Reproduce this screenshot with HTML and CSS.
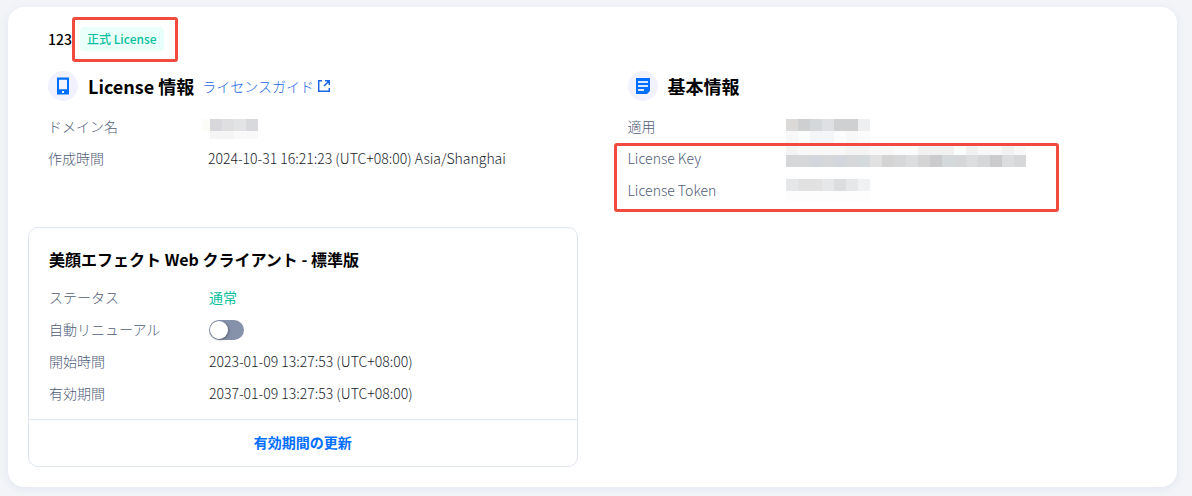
FILE: index.html
```html
<!DOCTYPE html>
<html lang="ja">
  <head>
    <meta charset="UTF-8" />
    <meta name="viewport" content="width=device-width, initial-scale=1.0" />
    <title>License</title>
    <link rel="stylesheet" href="styles.css">
  </head>
  <body>
    <main class="panel">
      <div class="panel-title">
        <h1>123</h1>
        <span class="badge">正式 License<i class="marker marker-badge"></i></span>
      </div>

      <div class="columns">
        <section class="info">
          <div class="info-head">
            <span class="info-icon">
              <svg width="14" height="18" viewBox="0 0 14 18">
                <path fill="#006eff" fill-rule="evenodd" d="M1 .4h12v17.2H1zM3 2.8v9.4h8V2.8zM6 14v2h2v-2z" />
              </svg>
            </span>
            <h2>License 情報</h2>
            <a class="guide-link" href="#">ライセンスガイド<svg width="14" height="14" viewBox="0 0 14 14" fill="none" stroke="currentColor" stroke-width="1.5">
                <path d="M5 1.7H1.7v10.6h10.6V9M8 1.7h4.3V6M12.3 1.7 7 7" />
              </svg></a>
          </div>
          <dl class="rows">
            <div class="row">
              <dt>ドメイン名</dt>
              <dd>
                <svg class="mosaic" width="50" height="32">
                  <path fill="#fcfdf8" d="M-6 8h8v12h-8z" />
                  <path fill="#d8d8dc" d="M2 8h12v12H2z" />
                  <path fill="#dfdfe2" d="M14 8h12v12H14z" />
                  <path fill="#e2e3e5" d="M26 8h12v12H26z" />
                  <path fill="#d8d9dc" d="M38 8h12v12H38z" />
                  <path fill="#f5f5f5" d="M2 20h24v8H2z" />
                  <path fill="#f9f9fa" d="M26 20h24v8H26z" />
                </svg>
              </dd>
            </div>
            <div class="row">
              <dt>作成時間</dt>
              <dd>2024-10-31 16:21:23 (UTC+08:00) Asia/Shanghai</dd>
            </div>
          </dl>
        </section>

        <section class="info basic">
          <div class="info-head">
            <span class="info-icon">
              <svg width="14" height="16" viewBox="0 0 14 16">
                <path fill="#006eff" d="M0 0h14v13l-3 3H0z" />
                <path stroke="#d6e6ff" stroke-width="2" d="M2 4h10M2 8h10M2 12h6" />
              </svg>
            </span>
            <h2>基本情報</h2>
          </div>
          <dl class="rows">
            <div class="row">
              <dt>適用</dt>
              <dd>
                <svg class="mosaic" width="84" height="32">
                  <path fill="#dbdad9" d="M0 8h12v12H0z" />
                  <path fill="#cecfd1" d="M12 8h12v12H12z" />
                  <path fill="#d4d8da" d="M24 8h12v12H24z" />
                  <path fill="#dfe0e3" d="M36 8h12v12H36z" />
                  <path fill="#cfd0d2" d="M48 8h24v12H48z" />
                  <path fill="#eeeff1" d="M72 8h12v12H72z" />
                  <path fill="#f8f8f8" d="M0 20h12v12H0z" />
                  <path fill="#fafdfc" d="M12 20h12v12H12z" />
                  <path fill="#f4f5f7" d="M24 20h24v12H24z" />
                  <path fill="#fdfcfd" d="M48 20h12v12H48z" />
                  <path fill="#f8f8f9" d="M60 20h12v12H60z" />
                  <path fill="#fbfbfb" d="M72 20h12v12H72z" />
                </svg>
              </dd>
            </div>
          </dl>
          <div class="marked">
            <dl class="rows">
              <div class="row">
                <dt>License Key</dt>
                <dd>
                  <svg class="mosaic" width="240" height="32">
                    <path fill="#f4f4f4" d="M0 0h12v12H0zM60 0h24v12H60z" />
                    <path fill="#f8f8f8" d="M12 0h48v12H12zM84 0h24v12H84zM192 0h24v12h-24zM228 0h12v12h-12z" />
                    <path fill="#fbfbfb" d="M108 0h24v12h-24z" />
                    <path fill="#f1f1f1" d="M132 0h36v12h-36zM180 0h12v12h-12zM216 0h12v12h-12z" />
                    <path fill="#f9fdfc" d="M168 0h12v12h-12z" />
                    <path fill="#d6d7d9" d="M0 12h240v12H0z" />
                    <path fill="#d3d6dc" d="M24 12h12v12H24zM48 12h12v12H48z" />
                    <path fill="#d4d9dc" d="M72 12h12v12H72zM156 12h12v12h-12z" />
                    <path fill="#e1e1e2" d="M84 12h12v12H84z" />
                    <path fill="#d4d4d4" d="M96 12h12v12H96zM132 12h12v12h-12z" />
                    <path fill="#cbcbcd" d="M144 12h12v12h-12zM204 12h12v12h-12z" />
                    <path fill="#dcdddf" d="M120 12h12v12h-12zM180 12h12v12h-12zM216 12h12v12h-12z" />
                  </svg>
                </dd>
              </div>
              <div class="row">
                <dt>License Token</dt>
                <dd>
                  <svg class="mosaic" width="84" height="32">
                    <path fill="#e6e7e8" d="M0 4h12v12H0zM36 4h12v12H36zM60 4h12v12H60z" />
                    <path fill="#e2e1e2" d="M12 4h24v12H12z" />
                    <path fill="#dcdddf" d="M48 4h12v12H48z" />
                    <path fill="#f0f1f3" d="M72 4h12v12H72z" />
                    <path fill="#fdfdfd" d="M0 16h84v11H0z" />
                  </svg>
                </dd>
              </div>
            </dl>
            <i class="marker marker-rows"></i>
          </div>
        </section>

        <section class="plan">
          <h3>美顔エフェクト Web クライアント - 標準版</h3>
          <dl class="rows">
            <div class="row">
              <dt>ステータス</dt>
              <dd class="status">通常</dd>
            </div>
            <div class="row">
              <dt><label for="auto-renew">自動リニューアル</label></dt>
              <dd><input class="switch" type="checkbox" id="auto-renew" /></dd>
            </div>
            <div class="row">
              <dt>開始時間</dt>
              <dd>2023-01-09 13:27:53 (UTC+08:00)</dd>
            </div>
            <div class="row">
              <dt>有効期間</dt>
              <dd>2037-01-09 13:27:53 (UTC+08:00)</dd>
            </div>
          </dl>
          <button type="button" class="renew">有効期間の更新</button>
        </section>
      </div>
    </main>
  </body>
</html>
```

FILE: styles.css
```css
* {
  box-sizing: border-box;
}
body {
  margin: 0;
  padding: 7px 15px 9px 8px;
  background-color: #f2f4f8;
  color: #000;
  font-family: "Noto Sans CJK JP", sans-serif;
  font-size: 14px;
}
h1,
h2,
h3,
dl,
dd {
  margin: 0;
}
.panel {
  padding: 20px;
  background-color: #fff;
  border-radius: 16px;
  box-shadow: 0 2px 8px rgba(54, 88, 140, 0.08);
}
.panel-title {
  display: flex;
  align-items: center;
  gap: 8px;
  padding-left: 20px;
  margin-bottom: 20px;
}
.panel-title h1 {
  font-size: 14px;
  font-weight: 500;
  line-height: 24px;
}
.badge {
  position: relative;
  padding: 0 7px;
  border-radius: 4px;
  background-color: #e8fffa;
  color: #0abf9f;
  font-size: 12px;
  font-weight: 500;
  line-height: 24px;
}
.marker {
  position: absolute;
  border: 3px solid #f04b3e;
  border-radius: 3px;
}
.marker-badge {
  inset: -10px -14px -11px -8px;
}
.marker-rows {
  top: 0;
  bottom: -5px;
  left: -14px;
  width: 445px;
}
.columns {
  display: grid;
  grid-template-columns: 1fr 1fr;
  gap: 20px 30px;
}
.info {
  padding-left: 20px;
}
.info-head {
  display: flex;
  align-items: center;
  gap: 10px;
  height: 30px;
  margin-bottom: 10px;
}
.info-head h2 {
  font-size: 18px;
  line-height: 30px;
}
.info-icon {
  display: flex;
  align-items: center;
  justify-content: center;
  width: 30px;
  height: 30px;
  border-radius: 50%;
  background-color: #f2f2ff;
}
.guide-link {
  display: flex;
  align-items: center;
  gap: 3px;
  margin-left: -2px;
  color: #1c66e5;
  font-weight: 300;
  text-decoration: none;
}
.marked {
  position: relative;
}
.row {
  display: flex;
  height: 32px;
  font-weight: 300;
  line-height: 30px;
}
.row dt {
  width: 160px;
  color: #4f5c78;
}
.basic dt {
  width: 158px;
}
.row dd {
  color: #20242c;
}
.row .status {
  color: #0abf9f;
  font-weight: 400;
}
.mosaic {
  display: block;
  overflow: visible;
  shape-rendering: crispEdges;
}
.plan {
  border: 1px solid #dfe5ef;
  border-radius: 10px;
}
.plan h3 {
  padding: 19px 20px 11px;
  font-size: 16px;
  line-height: 24px;
}
.plan .rows {
  padding: 0 20px 9px;
}
.switch {
  appearance: none;
  display: block;
  width: 35px;
  height: 20px;
  margin: 6px 0;
  padding: 1px;
  border-radius: 10px;
  background-color: #8592aa;
  cursor: pointer;
}
.switch::before {
  content: "";
  display: block;
  width: 18px;
  height: 18px;
  border-radius: 50%;
  background-color: #fff;
  box-shadow: 1px 1px 3px rgba(0, 0, 0, 0.3);
}
.switch:checked {
  background-color: #006eff;
}
.switch:checked::before {
  margin-left: 15px;
}
.renew {
  display: block;
  width: 100%;
  height: 47px;
  padding: 0 0 2px;
  border: none;
  border-top: 1px solid #dfe5ef;
  background: none;
  color: #006eff;
  font-family: inherit;
  font-size: 14px;
  font-weight: 700;
  cursor: pointer;
}
```
